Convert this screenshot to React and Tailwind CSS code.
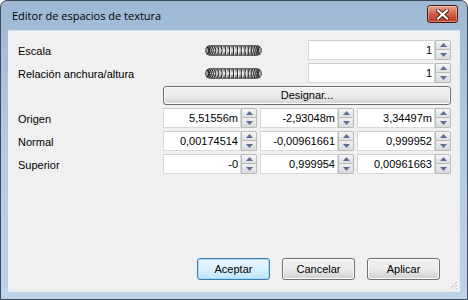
const ui = { fontFamily: '"Liberation Sans", Arial, sans-serif' };

function Spinner() {
  return (
    <div className="flex flex-col w-[16px] h-full shrink-0">
      <div className="h-[10px] flex items-center justify-center border border-[#b9b9b9] bg-gradient-to-b from-[#f6f6f6] to-[#e0e0e0] rounded-tr-[2px]">
        <svg width="7" height="4" viewBox="0 0 7 4">
          <path d="M0 4 L3.5 0 L7 4Z" fill="#5b6f98" />
        </svg>
      </div>
      <div className="h-[10px] flex items-center justify-center border border-t-0 border-[#b9b9b9] bg-gradient-to-b from-[#f1f1f1] to-[#dadada] rounded-br-[2px]">
        <svg width="7" height="4" viewBox="0 0 7 4">
          <path d="M0 0 L3.5 4 L7 0Z" fill="#5b6f98" />
        </svg>
      </div>
    </div>
  );
}

function NumField({ value, className }) {
  return (
    <div className={"flex h-[20px] " + className}>
      <div className="flex-1 bg-white border border-[#d9d9d9] border-t-[#cfcfcf] text-right pr-[2px] text-[11px] leading-[19px] text-black overflow-hidden whitespace-nowrap">
        {value}
      </div>
      <Spinner />
    </div>
  );
}

function Wheel() {
  const ridges = [];
  const n = 19;
  for (let i = 0; i < n; i++) {
    const t = -1.4 + (2.8 * i) / (n - 1);
    const x = 28.5 + 27 * Math.sin(t);
    const bend = Math.sin(t) * 2.4;
    ridges.push(
      <g key={i}>
        <path
          d={`M${x + 0.9} 1.2 Q${x + 0.9 - bend * 1.6} 5.5 ${x + 0.9} 9.8`}
          stroke="#ffffff"
          strokeWidth="0.8"
          fill="none"
        />
        <path
          d={`M${x} 1.2 Q${x - bend * 1.6} 5.5 ${x} 9.8`}
          stroke="#262626"
          strokeWidth="1"
          fill="none"
        />
      </g>
    );
  }
  return (
    <svg width="57" height="11" viewBox="0 0 57 11">
      <defs>
        <linearGradient id="wg" x1="0" y1="0" x2="0" y2="1">
          <stop offset="0" stopColor="#5a5a5a" />
          <stop offset="0.45" stopColor="#e8e8e8" />
          <stop offset="0.6" stopColor="#cfcfcf" />
          <stop offset="1" stopColor="#4a4a4a" />
        </linearGradient>
        <linearGradient id="wh" x1="0" y1="0" x2="1" y2="0">
          <stop offset="0" stopColor="#000" stopOpacity="0.3" />
          <stop offset="0.3" stopColor="#000" stopOpacity="0" />
          <stop offset="0.7" stopColor="#000" stopOpacity="0" />
          <stop offset="1" stopColor="#000" stopOpacity="0.3" />
        </linearGradient>
      </defs>
      <rect x="0.5" y="0.5" width="56" height="10" rx="5" fill="url(#wg)" stroke="#6a6a6a" />
      {ridges}
      <rect x="0.5" y="0.5" width="56" height="10" rx="5" fill="url(#wh)" />
    </svg>
  );
}

function Btn({ children, focused }) {
  return (
    <button
      className={
        "w-[73px] h-[22px] rounded-[3px] border text-[11px] text-black flex items-center justify-center " +
        (focused
          ? "border-[#3c7fb1] bg-gradient-to-b from-[#eaf6fd] via-[#d9f0fc] to-[#bee6fd] shadow-[inset_0_0_0_1px_#a7d8f5]"
          : "border-[#707070] bg-gradient-to-b from-[#f2f2f2] via-[#ebebeb] to-[#cfcfcf] shadow-[inset_0_0_0_1px_#fcfcfc]")
      }
      style={ui}
    >
      {children}
    </button>
  );
}

function Label({ children }) {
  return <div className="w-[145px] shrink-0 text-[11px] text-black pt-[2px]">{children}</div>;
}

export default function App() {
  return (
    <div className="w-[468px] h-[300px] flex flex-col rounded-t-[7px] border border-[#3d4a5a] bg-gradient-to-b from-[#9fb8d3] via-[#b4cbe4] to-[#bcd3ea] px-[7px] pb-[7px] overflow-hidden" style={ui}>
      {/* title bar */}
      <div className="h-[29px] flex items-center shrink-0 pl-[4px] pr-[2px]">
        <span className="text-[11px] text-black pt-[1px]" style={{ fontFamily: '"Segoe UI", "Open Sans", sans-serif' }}>
          Editor de espacios de textura
        </span>
        <div className="ml-auto mb-[3px] w-[31px] h-[18px] rounded-[3px] border border-[#4a1a14] bg-gradient-to-b from-[#e7a493] via-[#d0614b] to-[#b83a22] flex items-center justify-center shadow-[inset_0_0_0_1px_rgba(255,255,255,0.35)]">
          <svg width="13" height="11" viewBox="0 0 13 11">
            <path d="M2 1.5 L11 9.5 M11 1.5 L2 9.5" stroke="#4b1c14" strokeWidth="4" strokeLinecap="square" />
            <path d="M2 1.5 L11 9.5 M11 1.5 L2 9.5" stroke="#ffffff" strokeWidth="2.2" strokeLinecap="square" />
          </svg>
        </div>
      </div>

      {/* client */}
      <div className="flex-1 flex flex-col bg-[#f0f0f0] border border-[#e6edf5] border-t-[#d5dfea] relative">
        <div className="flex flex-col gap-[3px] pt-[9px] pl-[9px] pr-[8px]">
          <div className="flex items-center h-[20px]">
            <Label>Escala</Label>
            <div className="ml-[42px] flex"><Wheel /></div>
            <NumField value="1" className="ml-auto w-[143px]" />
          </div>
          <div className="flex items-center h-[20px]">
            <Label>Relación anchura/altura</Label>
            <div className="ml-[42px] flex"><Wheel /></div>
            <NumField value="1" className="ml-auto w-[143px]" />
          </div>
          <div className="flex h-[19px]">
            <div className="w-[145px] shrink-0" />
            <button className="flex-1 h-[19px] rounded-[3px] border border-[#707070] bg-gradient-to-b from-[#f2f2f2] via-[#ebebeb] to-[#d3d3d3] shadow-[inset_0_0_0_1px_#fcfcfc] text-[11px] text-black" style={ui}>
              Designar...
            </button>
          </div>
          {[
            ["Origen", "5,51556m", "-2,93048m", "3,34497m"],
            ["Normal", "0,00174514", "-0,00961661", "0,999952"],
            ["Superior", "-0", "0,999954", "0,00961663"],
          ].map(([label, a, b, c]) => (
            <div key={label} className="flex items-center h-[20px]">
              <Label>{label}</Label>
              <div className="flex gap-[3px]">
                <NumField value={a} className="w-[94px]" />
                <NumField value={b} className="w-[94px]" />
                <NumField value={c} className="w-[94px]" />
              </div>
            </div>
          ))}
        </div>

        <div className="mt-auto flex justify-end gap-[12px] pr-[19px] pb-[11px]">
          <Btn focused>Aceptar</Btn>
          <Btn>Cancelar</Btn>
          <Btn>Aplicar</Btn>
        </div>

        <svg className="absolute right-[1px] bottom-[1px]" width="10" height="10" viewBox="0 0 10 10">
          <path d="M9 2 L2 9 M9 5 L5 9 M9 8 L8 9" stroke="#a0a0a0" strokeWidth="1" strokeDasharray="1 1" />
          <path d="M10 3 L3 10 M10 6 L6 10" stroke="#ffffff" strokeWidth="1" strokeDasharray="1 1" />
        </svg>
      </div>
    </div>
  );
}
